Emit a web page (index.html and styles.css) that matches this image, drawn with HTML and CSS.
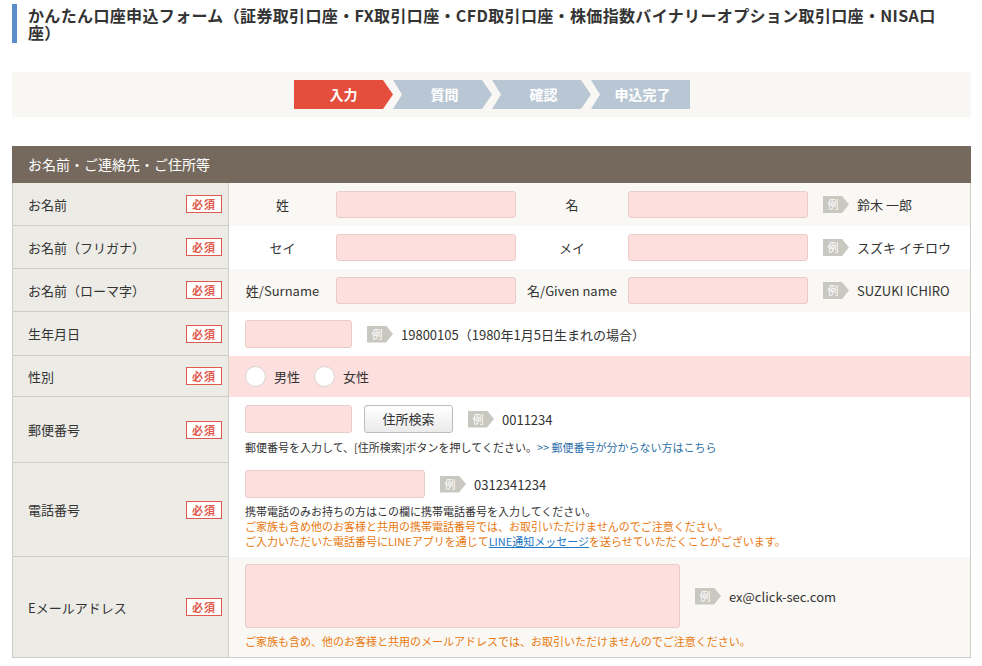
FILE: index.html
```html
<!DOCTYPE html>
<html lang="ja">
<head>
<meta charset="utf-8">
<title>かんたん口座申込フォーム</title>
<link rel="stylesheet" href="styles.css">
</head>
<body>
<div class="page">
  <h1 class="title">かんたん口座申込フォーム（証券取引口座・FX取引口座・CFD取引口座・株価指数バイナリーオプション取引口座・NISA口座）</h1>

  <div class="steps-box">
    <ol class="steps">
      <li class="step step-first step-active">入力</li>
      <li class="step">質問</li>
      <li class="step">確認</li>
      <li class="step step-last">申込完了</li>
    </ol>
  </div>

  <div class="section-head">お名前・ご連絡先・ご住所等</div>

  <div class="form-table">
    <div class="row">
      <div class="label-cell"><span>お名前</span><span class="req">必須</span></div>
      <div class="field-cell bg-beige name-grid">
        <span class="sub-label">姓</span>
        <span class="input w180"></span>
        <span class="sub-label">名</span>
        <span class="input w180"></span>
        <span class="example"><span class="ex-badge">例</span>鈴木 一郎</span>
      </div>
    </div>
    <div class="row">
      <div class="label-cell"><span>お名前（フリガナ）</span><span class="req">必須</span></div>
      <div class="field-cell bg-white name-grid">
        <span class="sub-label">セイ</span>
        <span class="input w180"></span>
        <span class="sub-label">メイ</span>
        <span class="input w180"></span>
        <span class="example"><span class="ex-badge">例</span>スズキ イチロウ</span>
      </div>
    </div>
    <div class="row">
      <div class="label-cell"><span>お名前（ローマ字）</span><span class="req">必須</span></div>
      <div class="field-cell bg-beige name-grid">
        <span class="sub-label">姓/Surname</span>
        <span class="input w180"></span>
        <span class="sub-label">名/Given name</span>
        <span class="input w180"></span>
        <span class="example"><span class="ex-badge">例</span>SUZUKI ICHIRO</span>
      </div>
    </div>
    <div class="row">
      <div class="label-cell"><span>生年月日</span><span class="req">必須</span></div>
      <div class="field-cell bg-white pad-row">
        <div class="line">
          <span class="input w107 h28"></span>
          <span class="example"><span class="ex-badge">例</span>19800105（1980年1月5日生まれの場合）</span>
        </div>
      </div>
    </div>
    <div class="row">
      <div class="label-cell"><span>性別</span><span class="req">必須</span></div>
      <div class="field-cell bg-pink pad-radio">
        <div class="line">
          <span class="radio"></span><span class="radio-text">男性</span>
          <span class="radio"></span><span class="radio-text">女性</span>
        </div>
      </div>
    </div>
    <div class="row">
      <div class="label-cell"><span>郵便番号</span><span class="req">必須</span></div>
      <div class="field-cell bg-white pad-block pad-zip">
        <div class="line">
          <span class="input w107 h28"></span>
          <span class="btn">住所検索</span>
          <span class="example"><span class="ex-badge">例</span>0011234</span>
        </div>
        <p class="note">郵便番号を入力して、[住所検索]ボタンを押してください。<span class="link">&gt;&gt; 郵便番号が分からない方はこちら</span></p>
      </div>
    </div>
    <div class="row">
      <div class="label-cell"><span>電話番号</span><span class="req">必須</span></div>
      <div class="field-cell bg-white pad-block">
        <div class="line">
          <span class="input w180 h28"></span>
          <span class="example"><span class="ex-badge">例</span>0312341234</span>
        </div>
        <p class="note">携帯電話のみお持ちの方はこの欄に携帯電話番号を入力してください。<br><span class="warn">ご家族も含め他のお客様と共用の携帯電話番号では、お取引いただけませんのでご注意ください。<br>ご入力いただいた電話番号にLINEアプリを通じて<span class="link-u">LINE通知メッセージ</span>を送らせていただくことがございます。</span></p>
      </div>
    </div>
    <div class="row row-last">
      <div class="label-cell"><span>Eメールアドレス</span><span class="req">必須</span></div>
      <div class="field-cell bg-beige pad-block">
        <div class="line">
          <span class="input textarea"></span>
          <span class="example"><span class="ex-badge">例</span>ex@click-sec.com</span>
        </div>
        <p class="note warn">ご家族も含め、他のお客様と共用のメールアドレスでは、お取引いただけませんのでご注意ください。</p>
      </div>
    </div>
  </div>
</div>
</body>
</html>
```

FILE: styles.css
```css
* { box-sizing: border-box; }

html, body {
  margin: 0;
  padding: 0;
  background: #ffffff;
}

body {
  font-family: "Noto Sans CJK JP", "Noto Sans", sans-serif;
  color: #333333;
  font-size: 13px;
}

.page {
  margin-left: 12px;
  width: 959px;
  padding-top: 4px;
}

.title {
  margin: 0;
  border-left: 5px solid #5b8dcc;
  padding: 3px 24px 3px 11px;
  font-size: 16px;
  line-height: 16.5px;
  letter-spacing: 0.35px;
  font-weight: bold;
  color: #333333;
}

.steps-box {
  margin-top: 29px;
  height: 45px;
  background: #f9f7f3;
  display: flex;
  justify-content: center;
  align-items: center;
}

.steps {
  list-style: none;
  margin: 0 0 0 1px;
  padding: 0;
  display: flex;
}

.step {
  width: 99px;
  height: 29px;
  background: #b9c7d4;
  color: #ffffff;
  font-weight: bold;
  font-size: 14px;
  line-height: 29px;
  text-align: center;
  padding-left: 4px;
  clip-path: polygon(0 0, 89px 0, 99px 50%, 89px 100%, 0 100%, 9px 50%);
}

.step-first {
  clip-path: polygon(0 0, 89px 0, 99px 50%, 89px 100%, 0 100%);
  padding-left: 0;
}

.step-last {
  clip-path: polygon(0 0, 100% 0, 100% 100%, 0 100%, 9px 50%);
}

.step-active {
  background: #e54d3d;
}

.section-head {
  margin-top: 29px;
  height: 37px;
  background: #75695d;
  color: #ffffff;
  font-size: 14px;
  line-height: 37px;
  padding-left: 16px;
}

.form-table {
  border-left: 1px solid #cfcdc8;
  border-right: 1px solid #cfcdc8;
  border-bottom: 1px solid #cfcdc8;
  width: 959px;
}

.row {
  display: grid;
  grid-template-columns: 216px 1fr;
}

.label-cell {
  background: #ecebe6;
  border-right: 1px solid #cfcdc8;
  border-bottom: 1px solid #cfcdc8;
  display: flex;
  align-items: center;
  justify-content: space-between;
  padding: 0 6px 0 15px;
  font-size: 13px;
}

.row-last .label-cell {
  border-bottom: none;
}

.req {
  width: 36px;
  height: 18px;
  border: 1px solid #e05a4e;
  background: #ffffff;
  color: #e05a4e;
  font-size: 11px;
  font-weight: bold;
  line-height: 16px;
  text-align: center;
  letter-spacing: 1px;
}

.field-cell {
  font-size: 13px;
}

.bg-beige { background: #faf8f4; }
.bg-white { background: #ffffff; }
.bg-pink { background: #fde0de; }

.name-grid {
  display: grid;
  grid-template-columns: 107px 180px 112px 180px auto;
  align-items: center;
  padding: 8px 0;
}

.sub-label {
  text-align: center;
  white-space: nowrap;
}

.input {
  display: block;
  height: 27px;
  background: #fde0de;
  border: 1px solid #e9cbc8;
  border-radius: 3px;
}

.w180 { width: 180px; }
.w107 { width: 107px; }
.h28 { height: 28px; }

.textarea {
  width: 435px;
  height: 64px;
}

.example {
  display: flex;
  align-items: center;
  white-space: nowrap;
  margin-left: 15px;
  font-size: 13px;
}

.ex-badge {
  width: 26px;
  height: 17px;
  background: #c9c8c0;
  color: #ffffff;
  font-size: 11px;
  line-height: 17px;
  padding-right: 6px;
  text-align: center;
  margin-right: 8px;
  clip-path: polygon(0 0, 19px 0, 26px 50%, 19px 100%, 0 100%);
}

.pad-row {
  padding: 8px 16px;
}

.pad-radio {
  padding: 10px 16px;
}

.pad-block {
  padding: 7px 16px 8px;
}

.pad-zip {
  padding-top: 8px;
}

.pad-zip .note {
  margin-top: 7px;
}

.line {
  display: flex;
  align-items: center;
}

.radio {
  width: 21px;
  height: 21px;
  border-radius: 50%;
  background: #ffffff;
  border: 1px solid #d6d2cd;
}

.radio-text {
  margin-left: 8px;
  margin-right: 14px;
}

.btn {
  margin-left: 12px;
  width: 89px;
  height: 28px;
  border: 1px solid #bcbcbc;
  border-radius: 3px;
  background: linear-gradient(#ffffff, #ebebeb);
  text-align: center;
  line-height: 26px;
  font-size: 13px;
  color: #333333;
}

.note {
  margin: 6px 0 0;
  font-size: 11px;
  line-height: 15px;
  color: #333333;
}

.link {
  color: #2d6fa8;
}

.warn {
  color: #e8780f;
}

.link-u {
  color: #2277c2;
  text-decoration: underline;
}
```
